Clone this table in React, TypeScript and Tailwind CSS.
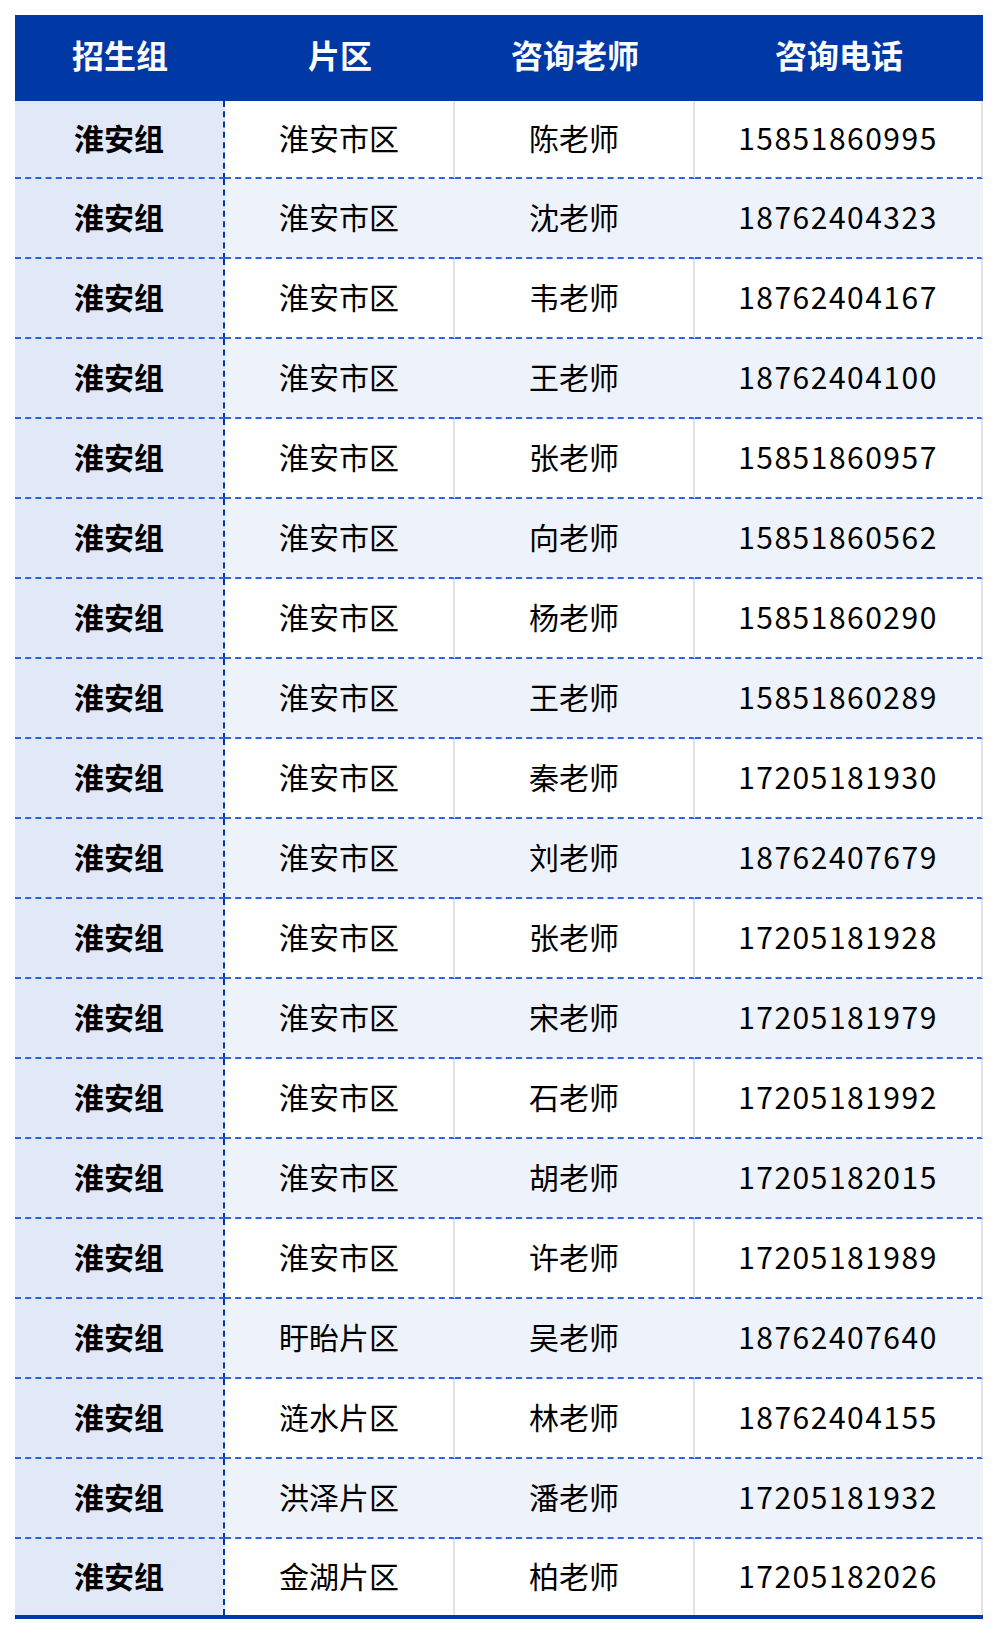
const rows: [string, string, string, string][] = [
  ["淮安组", "淮安市区", "陈老师", "15851860995"],
  ["淮安组", "淮安市区", "沈老师", "18762404323"],
  ["淮安组", "淮安市区", "韦老师", "18762404167"],
  ["淮安组", "淮安市区", "王老师", "18762404100"],
  ["淮安组", "淮安市区", "张老师", "15851860957"],
  ["淮安组", "淮安市区", "向老师", "15851860562"],
  ["淮安组", "淮安市区", "杨老师", "15851860290"],
  ["淮安组", "淮安市区", "王老师", "15851860289"],
  ["淮安组", "淮安市区", "秦老师", "17205181930"],
  ["淮安组", "淮安市区", "刘老师", "18762407679"],
  ["淮安组", "淮安市区", "张老师", "17205181928"],
  ["淮安组", "淮安市区", "宋老师", "17205181979"],
  ["淮安组", "淮安市区", "石老师", "17205181992"],
  ["淮安组", "淮安市区", "胡老师", "17205182015"],
  ["淮安组", "淮安市区", "许老师", "17205181989"],
  ["淮安组", "盱眙片区", "吴老师", "18762407640"],
  ["淮安组", "涟水片区", "林老师", "18762404155"],
  ["淮安组", "洪泽片区", "潘老师", "17205181932"],
  ["淮安组", "金湖片区", "柏老师", "17205182026"],
];

const headers = ["招生组", "片区", "咨询老师", "咨询电话"];

export default function App() {
  return (
    <div
      className="min-h-screen bg-white p-[15px]"
      style={{ fontFamily: '"Noto Sans CJK SC", "Noto Sans", sans-serif' }}
    >
      <div className="w-[968px] border-b-4 border-[#0039a6]">
        <div className="grid h-[86px] grid-cols-[210px_230px_240px_288px] bg-[#0039a6] text-[32px] font-bold text-white">
          {headers.map((h) => (
            <div key={h} className="flex items-center justify-center pb-2">
              {h}
            </div>
          ))}
        </div>

        {rows.map((r, i) => {
          const first = i === 0;
          const last = i === rows.length - 1;
          const striped = i % 2 === 1;
          const h = first ? "h-[78px]" : last ? "h-[76px]" : "h-[80px]";
          const line = last
            ? ""
            : "border-b-2 [border-bottom-style:dashed] border-b-[#2563eb]";
          const bg = striped ? "bg-[#eef3fb]" : "bg-white";
          const side = striped ? "border-r-[#eef3fb]" : "border-r-[#e3e3e3]";
          return (
            <div
              key={i}
              className={`grid grid-cols-[210px_230px_240px_288px] text-[30px] text-black ${h}`}
            >
              <div
                className={`flex items-center justify-center border-r-2 [border-right-style:dashed] border-r-[#0039a6] bg-[#e1e8f8] pb-1 font-bold ${line}`}
              >
                {r[0]}
              </div>
              <div className={`flex border-r-2 [border-right-style:solid] ${side} ${bg} ${line}`}>
                <div className="flex flex-1 items-center justify-center pb-1">{r[1]}</div>
              </div>
              <div className={`flex border-r-2 [border-right-style:solid] ${side} ${bg} ${line}`}>
                <div className="flex flex-1 items-center justify-center pb-1">{r[2]}</div>
              </div>
              <div className={`flex border-r-2 [border-right-style:solid] ${side} ${bg} ${line}`}>
                <div className="flex flex-1 items-center justify-center pb-1 tracking-[1.5px]">
                  {r[3]}
                </div>
              </div>
            </div>
          );
        })}
      </div>
    </div>
  );
}
